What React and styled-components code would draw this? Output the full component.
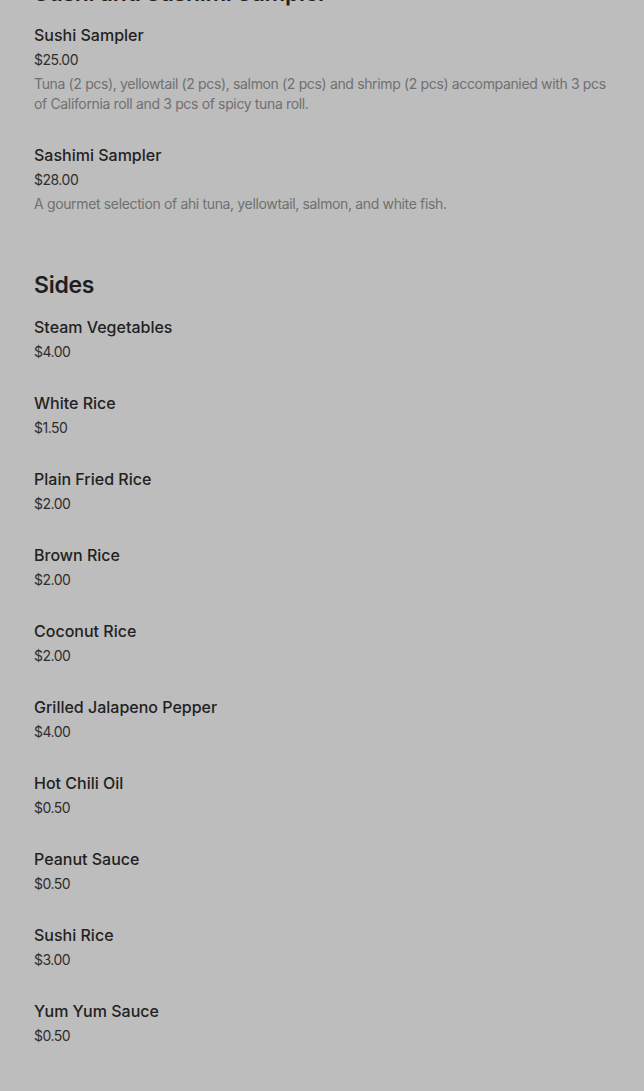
import React from 'react'
import styled, { createGlobalStyle } from 'styled-components'

const GlobalStyle = createGlobalStyle`
    html, body {
        margin: 0;
        padding: 0;
        background: #bdbdbd;
        overflow: hidden;
    }
    body {
        font-family: Inter, "Noto Sans", sans-serif;
        -webkit-font-smoothing: antialiased;
    }
`

// styling
const Page = styled.div`
    padding: 0 34px;
    margin-top: -23px;
`

const Section = styled.section`
    padding-bottom: 40px;
`

const SectionTitle = styled.h2`
    margin: 0;
    font-size: 23px;
    line-height: 32px;
    font-weight: 600;
    letter-spacing: -0.3px;
    color: #1f1f1f;
`

const Item = styled.div`
    padding: 14px 0 15px;
    width: 576px;
`

const Name = styled.div`
    font-size: 16px;
    line-height: 24px;
    font-weight: 500;
    color: #222;
`

const Price = styled.div`
    margin-top: 3px;
    font-size: 14px;
    line-height: 20px;
    letter-spacing: -0.5px;
    color: #2e2e2e;
`

const Description = styled.div`
    margin-top: 4px;
    font-size: 14px;
    line-height: 20px;
    letter-spacing: -0.35px;
    color: #707070;
`

const sections = [
    {
        title: 'Sushi and Sashimi Sampler',
        items: [
            {
                name: 'Sushi Sampler',
                price: '$25.00',
                description: 'Tuna (2 pcs), yellowtail (2 pcs), salmon (2 pcs) and shrimp (2 pcs) accompanied with 3 pcs of California roll and 3 pcs of spicy tuna roll.',
            },
            {
                name: 'Sashimi Sampler',
                price: '$28.00',
                description: 'A gourmet selection of ahi tuna, yellowtail, salmon, and white fish.',
            },
        ],
    },
    {
        title: 'Sides',
        items: [
            { name: 'Steam Vegetables', price: '$4.00' },
            { name: 'White Rice', price: '$1.50' },
            { name: 'Plain Fried Rice', price: '$2.00' },
            { name: 'Brown Rice', price: '$2.00' },
            { name: 'Coconut Rice', price: '$2.00' },
            { name: 'Grilled Jalapeno Pepper', price: '$4.00' },
            { name: 'Hot Chili Oil', price: '$0.50' },
            { name: 'Peanut Sauce', price: '$0.50' },
            { name: 'Sushi Rice', price: '$3.00' },
            { name: 'Yum Yum Sauce', price: '$0.50' },
        ],
    },
]

export default function App() {
    return (
        <>
            <GlobalStyle />
            <Page>
                {sections.map(section => (
                    <Section key={section.title}>
                        <SectionTitle>{section.title}</SectionTitle>
                        {section.items.map(item => (
                            <Item key={item.name}>
                                <Name>{item.name}</Name>
                                <Price>{item.price}</Price>
                                {item.description && <Description>{item.description}</Description>}
                            </Item>
                        ))}
                    </Section>
                ))}
            </Page>
        </>
    )
}
